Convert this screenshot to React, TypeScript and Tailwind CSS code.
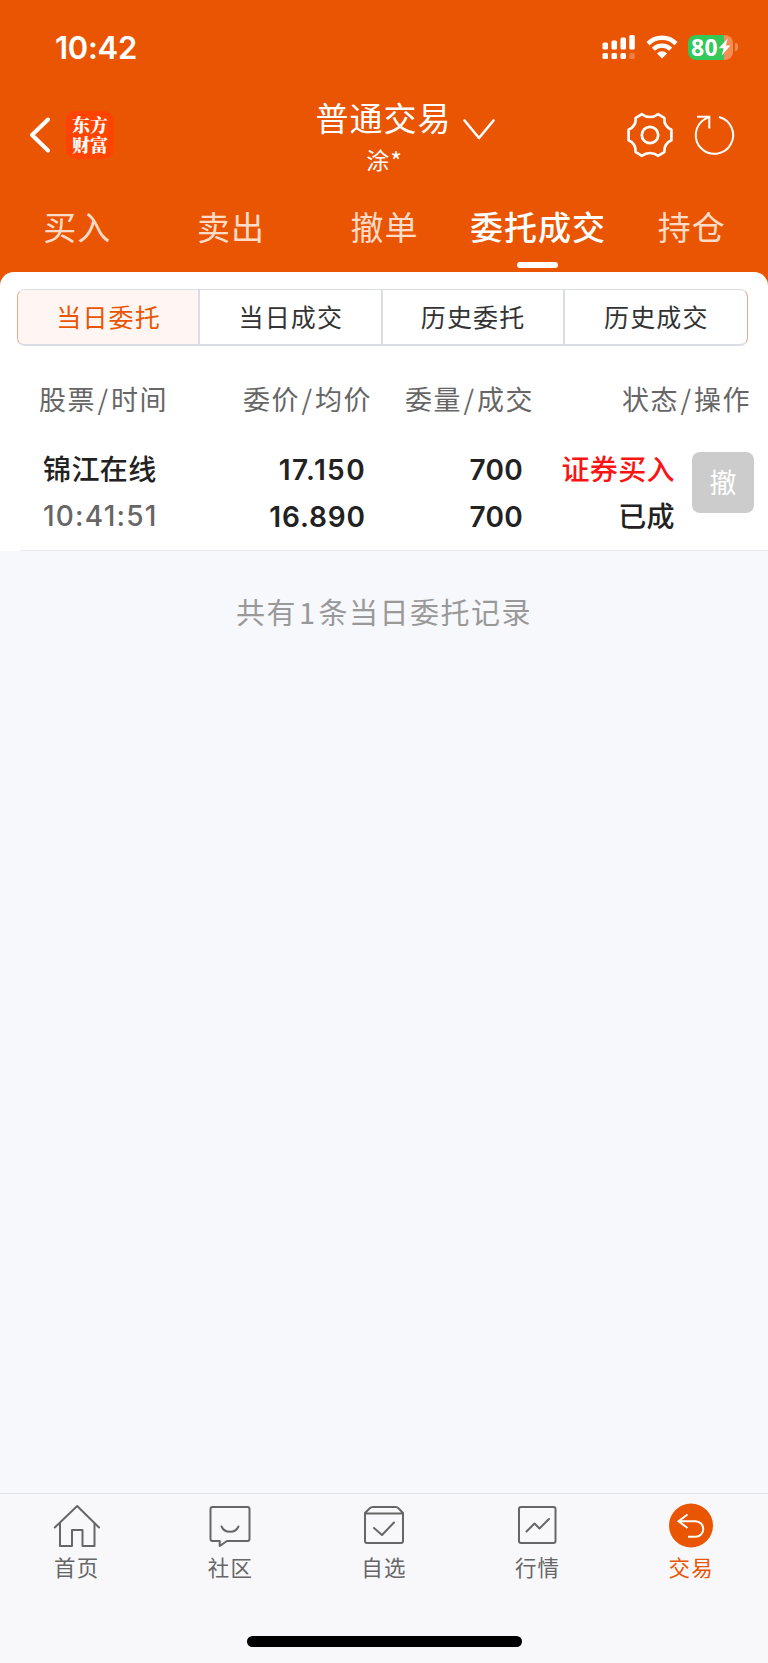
import React from "react";

const tabs = ["买入", "卖出", "撤单", "委托成交", "持仓"];
const segments = ["当日委托", "当日成交", "历史委托", "历史成交"];

function StatusBar() {
  return (
    <div className="flex h-[94px] items-center justify-between pl-[55px] pr-[30px]">
      <span className="font-['Inter'] text-[31px] font-semibold leading-none tracking-[-0.3px]">10:42</span>
      <div className="flex items-center">
        <svg className="mr-[10px] h-[26px] w-[34px]" viewBox="0 0 34 26" fill="#fff">
          <rect x="0.5" y="8.5" width="5.5" height="7" rx="1.5" />
          <rect x="9.5" y="6.5" width="5.5" height="9" rx="1.5" />
          <rect x="18.5" y="3.5" width="5.5" height="12" rx="1.5" />
          <rect x="27.3" y="1" width="5.5" height="14.5" rx="1.5" />
          <rect x="0.5" y="19" width="5.5" height="6" rx="1.5" />
          <rect x="9.5" y="19" width="5.5" height="6" rx="1.5" />
          <rect x="18.5" y="19" width="5.5" height="6" rx="1.5" />
          <rect x="27.3" y="19" width="5.5" height="6" rx="1.5" opacity="0.25" />
        </svg>
        <svg className="mr-[10px] h-[26px] w-[32px]" viewBox="0 0 32 26">
          <g fill="none" stroke="#fff" strokeWidth="4.4">
            <path d="M2 9.6A19.8 19.8 0 0 1 30 9.6" />
            <path d="M7.4 15.2A12.2 12.2 0 0 1 24.6 15.2" />
          </g>
          <path d="M16 24.4l-5-5a7 7 0 0 1 10 0z" fill="#fff" />
        </svg>
        <div className="flex h-[25px] w-[45px] items-center rounded-[8px] bg-[linear-gradient(to_right,#34c759_80%,#f28d56_80%)] pl-[3px]">
          <span className="font-['Open_Sans'] text-[23px] font-bold leading-none tracking-[0.3px]">80</span>
          <svg className="h-[18px] w-[13px]" viewBox="0 0 13 18" fill="#fff">
            <path d="M9.8 0.3L0.8 10.2H5.6L3.6 17.8L12.4 7.4H7.8z" />
          </svg>
        </div>
        <div className="ml-[2px] h-[8px] w-[3px] rounded-r-full bg-[#f28d56]" />
      </div>
    </div>
  );
}

function TitleBar() {
  return (
    <div className="flex h-[95px] items-start">
      <div className="flex h-[82px] w-[260px] items-center pl-[28px]">
        <svg className="h-[38px] w-[22px]" viewBox="0 0 22 38" fill="none" stroke="#fff" strokeWidth="4" strokeLinecap="round" strokeLinejoin="round">
          <path d="M20 3.5L4 19L20 34.5" />
        </svg>
        <div className="ml-[16px] flex h-[48px] w-[48px] items-center justify-center rounded-[10px] bg-[#ff4400] pb-[2px]">
          <p className="w-[36px] break-all font-['Noto_Serif_CJK_SC','Noto_Sans_CJK_SC',sans-serif] text-[18px] font-black leading-[20px]">东方财富</p>
        </div>
      </div>
      <div className="flex w-[248px] flex-col items-center">
        <div className="flex h-[46px] items-center pl-[43px]">
          <span className="text-[33px] leading-none tracking-[1px]">普通交易</span>
          <svg className="ml-[10px] mt-[26px] h-[24px] w-[34px]" viewBox="0 0 34 24" fill="none" stroke="#fff" strokeWidth="2.6" strokeLinecap="round" strokeLinejoin="round">
            <path d="M2.5 2.5L17 20L31.5 2.5" />
          </svg>
        </div>
        <span className="mt-[8px] flex text-[23px] leading-none">
          涂<span className="pl-px text-[25px]">*</span>
        </span>
      </div>
      <div className="flex h-[82px] flex-1 items-center justify-end pr-[31px]">
        <svg className="h-[48px] w-[48px]" viewBox="-24 -24 48 48" fill="none" stroke="#fff" strokeWidth="2.7" strokeLinejoin="round">
          <path d="M-8 -20.8Q-4.5 -18 0 -18Q4.5 -18 8 -20.8L14.3 -17.2Q14 -12.5 16.2 -9.4Q18 -6.6 21.4 -5.2L21.4 5.2Q18 6.6 16.2 9.4Q14 12.5 14.3 17.2L8 20.8Q4.5 18 0 18Q-4.5 18 -8 20.8L-14.3 17.2Q-14 12.5 -16.2 9.4Q-18 6.6 -21.4 5.2L-21.4 -5.2Q-18 -6.6 -16.2 -9.4Q-14 -12.5 -14.3 -17.2Z" />
          <circle r="8.2" />
        </svg>
        <svg className="ml-[19px] h-[44px] w-[44px]" viewBox="-22 -22 44 44" fill="none" stroke="#fff" strokeWidth="2">
          <path d="M4 -18A18.7 18.7 0 1 1 -10 -16L-5.7 -18.2" />
          <path d="M-18 -18.3H-5.7V-6.5" />
        </svg>
      </div>
    </div>
  );
}

function Tabs() {
  return (
    <div className="grid h-[83px] grid-cols-5">
      {tabs.map((tab) => {
        const active = tab === "委托成交";
        return (
          <div key={tab} className="flex flex-col items-center pt-[20px]">
            <span className={`whitespace-nowrap pl-px text-[33px] leading-[35px] tracking-[1px] ${active ? "font-medium" : "text-[#ffdcc8]"}`}>
              {tab}
            </span>
            {active && <div className="mt-[18px] h-[6px] w-[41px] rounded-full bg-white" />}
          </div>
        );
      })}
    </div>
  );
}

function Segments() {
  return (
    <div className="ml-[17px] mr-[20px] grid h-[57px] grid-cols-4 divide-x-2 divide-[#dadde4] overflow-hidden rounded-[8px] border border-b-2 border-[#dadde4] border-l-[#e6a98c] border-r-[#e6a98c]">
      {segments.map((label, i) => (
        <div
          key={label}
          className={`flex items-center justify-center pb-px pl-px text-[25px] leading-none tracking-[1.2px] ${i === 0 ? "bg-[#fff5f2] text-[#ea5504]" : "text-[#333]"}`}
        >
          {label}
        </div>
      ))}
    </div>
  );
}

function Slash() {
  return <span className="mx-[1.5px]">/</span>;
}

function OrderTable() {
  return (
    <>
      <div className="mt-[34px] flex h-[36px] items-center text-[27px] leading-none tracking-[1.5px] text-[#666]">
        <span className="w-[190px] pl-[39px]">股票<Slash />时间</span>
        <span className="w-[182px] text-right">委价<Slash />均价</span>
        <span className="w-[162px] text-right">委量<Slash />成交</span>
        <span className="flex-1 pr-[17px] text-right">状态<Slash />操作</span>
      </div>
      <div className="mt-[34px] flex h-[100px] text-[28px] font-medium text-[#222]">
        <div className="-mt-[5px] w-[190px] pl-[43px] leading-[47px]">
          <p className="tracking-[0.4px]">锦江在线</p>
          <p className="pt-px font-['Inter'] tracking-[1.2px] text-[#666]">10:41:51</p>
        </div>
        <div className="-mt-[3px] w-[176px] text-right font-['Inter'] font-semibold leading-[47px]">
          <p className="tracking-[1.4px]">17.150</p>
          <p className="tracking-[0.9px]">16.890</p>
        </div>
        <div className="-mt-[3px] w-[157px] text-right font-['Inter'] font-semibold leading-[47px] tracking-[0.3px]">
          <p>700</p>
          <p>700</p>
        </div>
        <div className="-mt-[5px] w-[152px] text-right leading-[47px] tracking-[0.4px]">
          <p className="text-[#fa1414]">证券买入</p>
          <p>已成</p>
        </div>
        <button className="ml-[17px] mt-[2px] flex h-[61px] w-[62px] items-center justify-center rounded-[8px] bg-[#ccc] pb-[2px] text-[27px] font-normal leading-none text-white">
          撤
        </button>
      </div>
      <div className="ml-[20px] h-px bg-[#ececee]" />
    </>
  );
}

function NavItem({ label, active, children }: { label: string; active?: boolean; children: React.ReactNode }) {
  return (
    <div className={`flex flex-col items-center pt-[7px] ${active ? "text-[#ea5504]" : "text-[#666]"}`}>
      <svg className="h-[48px] w-[48px]" viewBox="0 0 48 48" fill="none" stroke="currentColor" strokeWidth="2" strokeLinecap="round" strokeLinejoin="round">
        {children}
      </svg>
      <span className="mt-[7px] text-[21.5px] leading-none tracking-[1.2px]">{label}</span>
    </div>
  );
}

function BottomNav() {
  return (
    <nav className="flex h-[170px] flex-col border-t border-[#e1e3e6] bg-[#f8f8fb]">
      <div className="grid h-[142px] grid-cols-5">
        <NavItem label="首页">
          <path d="M1.8 26.5L24.2 5L46 26.5" />
          <path d="M7 22.5V45H19V29H29.5V45H41.5V22.5" />
        </NavItem>
        <NavItem label="社区">
          <path d="M6.5 6H41.5A2 2 0 0 1 43.5 8V38A2 2 0 0 1 41.5 40H21L13.7 45V40H6.5A2 2 0 0 1 4.5 38V8A2 2 0 0 1 6.5 6Z" />
          <path d="M15.5 25.5Q18 30.8 24 30.8Q30 30.8 32.5 25.5" />
        </NavItem>
        <NavItem label="自选">
          <path d="M5 12L9.5 7.5Q10.8 6 13 6H35.5Q37.5 6 38.7 7.5L43 12V40A2 2 0 0 1 41 42H7A2 2 0 0 1 5 40ZM5.5 12.5H42.5" />
          <path d="M14 27L22 34L34 21.5" />
        </NavItem>
        <NavItem label="行情">
          <rect x="5" y="6" width="36.5" height="36" rx="2" />
          <path d="M12.5 30.5L20.5 22.5L25.5 27.5L35 18" />
        </NavItem>
        <NavItem label="交易" active>
          <circle cx="24" cy="24.5" r="22" fill="currentColor" stroke="none" />
          <path d="M20.5 13.5L11.5 20.2L20.5 27M12 20.2H28.5A7.8 7.8 0 0 1 28.5 35.8H21" stroke="#fff" strokeLinecap="butt" strokeLinejoin="miter" />
        </NavItem>
      </div>
      <div className="mx-auto h-[11px] w-[275px] rounded-full bg-black" />
    </nav>
  );
}

export default function App() {
  return (
    <div className="flex h-[1663px] w-[768px] flex-col overflow-hidden bg-[#f7f8fb] font-['Noto_Sans_CJK_SC',sans-serif]">
      <div className="bg-[#ea5504] text-white">
        <StatusBar />
        <TitleBar />
        <Tabs />
        <div className="h-[14px] rounded-t-[14px] bg-white" />
      </div>
      <div className="bg-white pt-[3px]">
        <Segments />
        <OrderTable />
      </div>
      <p className="mt-[44px] text-center text-[29px] leading-[32px] tracking-[1.5px] text-[#999]">
        共有<span className="mx-[2px]">1</span>条当日委托记录
      </p>
      <div className="flex-1" />
      <BottomNav />
    </div>
  );
}
